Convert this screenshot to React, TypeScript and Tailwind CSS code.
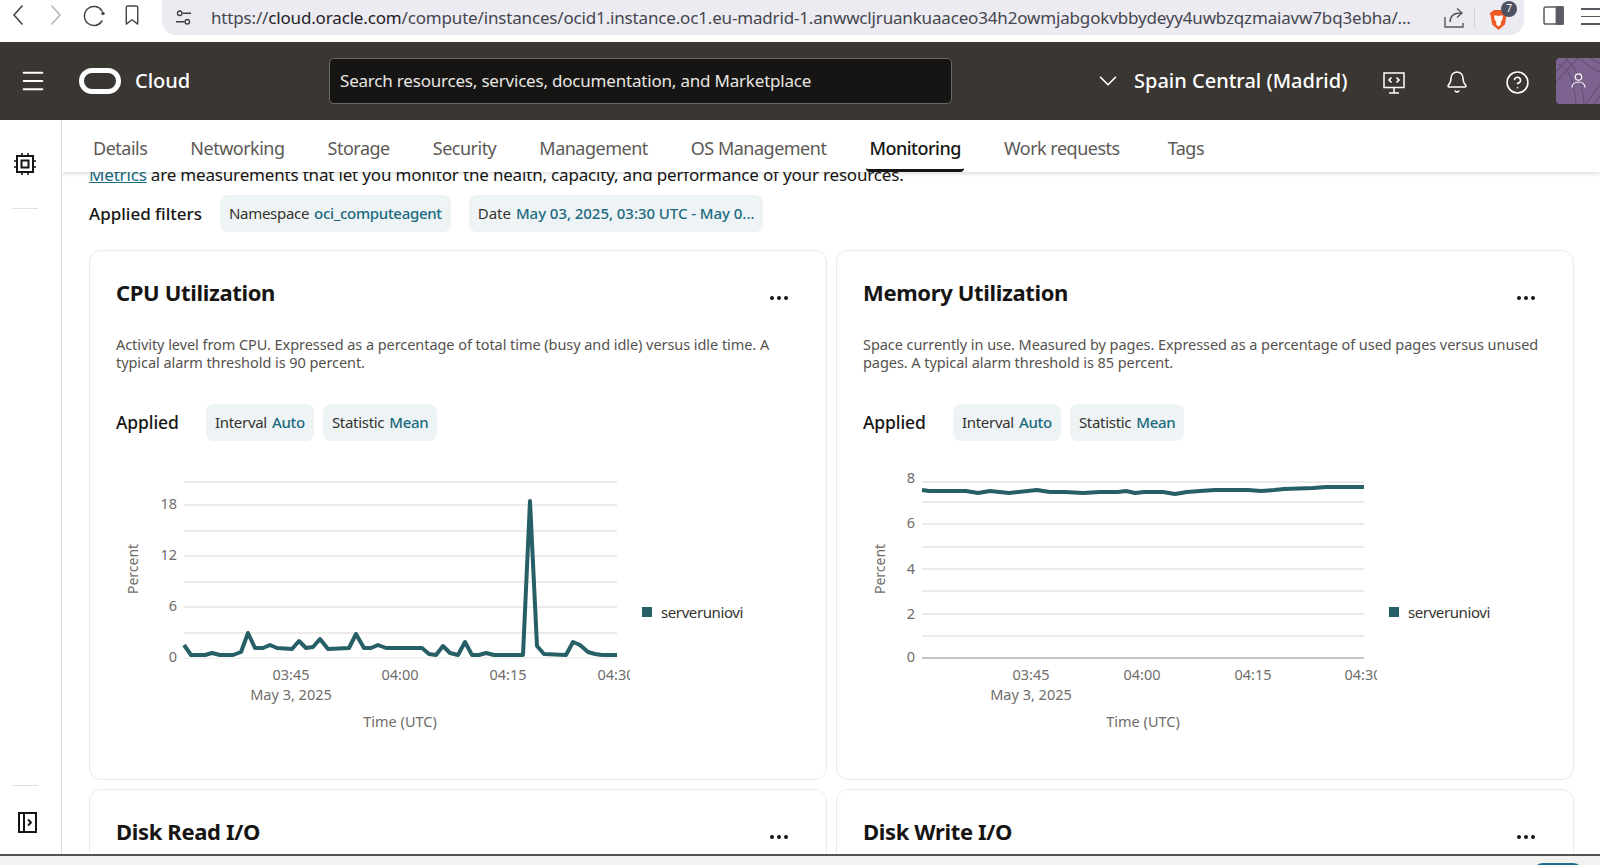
import { Bell, ChevronDown, CircleHelp, Menu } from "lucide-react";

const tabs = ["Details", "Networking", "Storage", "Security", "Management", "OS Management", "Monitoring", "Work requests", "Tags"];

// traced from the screenshot, page coordinates
const cpuLine = [
  [184, 645], [191, 655], [205, 655], [212, 653], [220, 655], [233, 655], [241, 652], [248, 633], [255, 648], [263, 648],
  [270, 645], [277, 648], [292, 649], [299, 641], [306, 648], [313, 647], [320, 639], [328, 649], [349, 648], [356, 634],
  [364, 648], [371, 648], [378, 645], [386, 648], [422, 648], [429, 654], [436, 655], [443, 646], [450, 653], [458, 655],
  [465, 642], [472, 655], [479, 655], [486, 653], [494, 655], [501, 655], [508, 655], [523, 655], [530, 501], [537, 646],
  [544, 654], [566, 655], [573, 642], [580, 645], [588, 652], [595, 654], [602, 655], [617, 655],
];

const memLine = [
  [922, 490], [929, 491], [966, 491], [978, 493], [990, 491], [1009, 493], [1037, 490], [1050, 492], [1065, 492], [1083, 493],
  [1100, 492], [1118, 492], [1126, 491], [1135, 493], [1144, 492], [1163, 492], [1175, 494], [1187, 492], [1200, 491], [1215, 490],
  [1248, 490], [1261, 491], [1274, 490], [1284, 489], [1313, 488], [1326, 487], [1364, 487],
];

function Chip({ label, value, track = "tracking-[-0.3px]" }: { label: string; value: string; track?: string }) {
  return (
    <div className={"flex h-[37px] items-center gap-[5px] whitespace-nowrap rounded-lg bg-[#eef4f5] px-[9px] text-[15px] text-[#35322e] " + track}>
      {label}
      <span className="font-medium text-[#1b6a80]">{value}</span>
    </div>
  );
}

function Chart({ left, x0, x1, line, grid, yLabels, xLabels, mayX, timeX, dark }: {
  left: number;
  x0: number;
  x1: number;
  line: number[][];
  grid: number[];
  yLabels: [string, number][];
  xLabels: [string, number][];
  mayX: number;
  timeX: number;
  dark?: boolean;
}) {
  const points = line.map((p) => p.join(",")).join(" ");
  return (
    <svg width="514" height="302" viewBox={`${left} 462 514 302`} className="shrink-0">
      {grid.map((y) => (
        <line key={y} x1={x0} x2={x1} y1={y} y2={y} stroke="#e6e5e3" strokeWidth="1.5" />
      ))}
      <line x1={x0} x2={x1} y1="658" y2="658" stroke={dark ? "#8b8985" : "#e6e5e3"} strokeWidth="1.2" />
      <polyline points={points} fill="none" stroke="#275f66" strokeWidth="4" strokeLinejoin="round" />
      <g fontSize="14.5" fill="#6f6d69">
        {yLabels.map(([t, y]) => (
          <text key={t} x={x0 - 7} y={y + 4} textAnchor="end">{t}</text>
        ))}
        {xLabels.map(([t, x]) => (
          <text key={t} x={x} y="680" textAnchor="middle">{t}</text>
        ))}
        <text x={mayX} y="700" textAnchor="middle">May 3, 2025</text>
        <text x={timeX} y="727" textAnchor="middle">Time (UTC)</text>
        <text transform={`translate(${left + 22},569) rotate(-90)`} textAnchor="middle" fontSize="14">Percent</text>
      </g>
    </svg>
  );
}

function CardHead({ title }: { title: string }) {
  return (
    <div className="flex items-center justify-between pr-[12px]">
      <h2 className="text-[22px] font-bold leading-[30px] tracking-[-0.35px] text-[#161513]">{title}</h2>
      <div className="mt-[11px] flex gap-[3px]">
        <span className="size-[4px] rounded-full bg-[#161513]" />
        <span className="size-[4px] rounded-full bg-[#161513]" />
        <span className="size-[4px] rounded-full bg-[#161513]" />
      </div>
    </div>
  );
}

function MetricCard({ title, desc, children }: { title: string; desc: string[]; children?: React.ReactNode }) {
  return (
    <div className="h-[530px] rounded-xl border border-[#ecebe9] bg-white px-[26px] pt-[26px]">
      <CardHead title={title} />
      <p className="mt-[29px] text-[14.5px] leading-[17.5px] tracking-[-0.06px] text-[#55524e]">
        {desc.map((d) => (
          <span key={d} className="block whitespace-nowrap">{d}</span>
        ))}
      </p>
      <div className="mt-[33px] flex items-center">
        <span className="w-[90px] text-[17.5px] font-medium tracking-[-0.1px] text-[#161513]">Applied</span>
        <div className="flex gap-[9px]">
          <Chip label="Interval" value="Auto" />
          <Chip label="Statistic" value="Mean" />
        </div>
      </div>
      <div className="mt-[21px] flex items-center">
        {children}
        <div className="-mt-[2px] ml-[12px] flex items-center gap-[9px] text-[15px] tracking-[-0.4px] text-[#35322e]">
          <span className="size-[10px] bg-[#275f66]" />
          serveruniovi
        </div>
      </div>
    </div>
  );
}

function BrowserBar() {
  return (
    <div className="flex h-[42px] shrink-0 items-start bg-white">
      <svg viewBox="0 0 12 22" className="ml-[12px] mt-[4px] h-[22px] w-[12px]" fill="none" stroke="#45464d" strokeWidth="1.6">
        <path d="M10.500 1.500 2 11l8.500 9.500" />
      </svg>
      <svg viewBox="0 0 12 22" className="ml-[26px] mt-[4px] h-[22px] w-[12px]" fill="none" stroke="#b5b5ba" strokeWidth="1.6">
        <path d="M1.500 1.500 10 11l-8.500 9.500" />
      </svg>
      <svg viewBox="0 0 24 24" className="ml-[21px] mt-[4px] size-[24px]" fill="none" stroke="#45464d" strokeWidth="1.5" strokeLinecap="round">
        <path d="M19 17a9.500 9.500 0 1 1 0-10" />
        <circle cx="20" cy="9.500" r="1.700" fill="#45464d" stroke="none" />
      </svg>
      <svg viewBox="0 0 16 22" className="ml-[17px] mt-[5px] h-[21px] w-[16px]" fill="none" stroke="#45464d" strokeWidth="1.5" strokeLinejoin="round">
        <path d="M2 2.500a1.500 1.500 0 0 1 1.500-1.500h9a1.500 1.500 0 0 1 1.500 1.500V20l-6-4.500L2 20z" />
      </svg>
      <div className="ml-[22px] flex h-[35px] w-[1362px] items-center rounded-b-[14px] bg-[#ecebf1] pl-[13px]">
        <svg viewBox="0 0 18 18" className="size-[17px]" fill="none" stroke="#3f4048" strokeWidth="1.4">
          <circle cx="5" cy="4.500" r="2.400" />
          <path d="M8 4.500h9M1 13.500h9" />
          <circle cx="13" cy="13.500" r="2.400" />
        </svg>
        <span className="ml-[19px] w-[1203px] whitespace-nowrap text-[17px] tracking-[-0.165px] text-[#45464f]">
          https://<span className="text-[#1f2026]">cloud.oracle.com</span>/compute/instances/ocid1.instance.oc1.eu-madrid-1.anwwcljruankuaaceo34h2owmjabgokvbbydeyy4uwbzqzmaiavw7bq3ebha/...
        </span>
        <svg viewBox="0 0 22 22" className="ml-auto size-[22px]" fill="none" stroke="#55565e" strokeWidth="1.4">
          <path d="M2 10v10h18v-4M7 15c0-6 4-9 11-9M14 1.500 19 6l-5 4.500" />
        </svg>
        <span className="ml-[9px] h-[20px] w-[1.5px] bg-[#d3d3d8]" />
        <svg viewBox="0 0 20 24" className="ml-[14px] mt-[4px] h-[22px] w-[19px]">
          <path d="M5 1h10l2 2 2.500 1-1 4-1.500 9-7 6-7-6L1.500 8l-1-4L3 3z" fill="#ef5a25" />
          <path d="M5 7h3.500L10 8l1.500-1H15l-1 5-1.500 2v3L10 19l-2.500-2v-3L6 12z" fill="#fff" />
        </svg>
        <span className="relative -left-[7px] -top-[9px] flex size-[16px] items-center justify-center rounded-full bg-[#4d5263] text-[10px] text-white">7</span>
      </div>
      <svg viewBox="0 0 22 20" className="ml-[19px] mt-[6px] h-[19px] w-[21px]" fill="none" stroke="#5b5c63" strokeWidth="1.6">
        <rect x="1" y="1" width="20" height="18" rx="2" />
        <rect x="14" y="1" width="7" height="18" fill="#5b5c63" />
      </svg>
      <div className="ml-[17px] mt-[8px] flex w-[19px] flex-col gap-[6px]">
        <span className="h-[1.5px] bg-[#55565e]" />
        <span className="h-[1.5px] bg-[#55565e]" />
        <span className="h-[1.5px] bg-[#55565e]" />
      </div>
    </div>
  );
}

function Header() {
  return (
    <header className="flex h-[78px] shrink-0 items-center bg-[#3a3632] text-white">
      <div className="flex w-[329px] shrink-0 items-center">
        <Menu className="ml-[19px] size-[28px]" strokeWidth={1.7} />
        <svg viewBox="0 0 42 26" className="ml-[32px] h-[26px] w-[42px]" fill="none" stroke="#fff" strokeWidth="5">
          <rect x="2.500" y="2.500" width="37" height="21" rx="10.500" />
        </svg>
        <span className="ml-[14px] text-[20px] font-medium">Cloud</span>
      </div>
      <div className="flex h-[46px] w-[623px] shrink-0 items-center rounded-[5px] border border-[#6b6965] bg-[#161513] pl-[10px] text-[17px] tracking-[-0.2px] text-[#e8e6e3]">
        Search resources, services, documentation, and Marketplace
      </div>
      <ChevronDown className="ml-[141px] size-[30px]" strokeWidth={1.4} />
      <span className="ml-[11px] whitespace-nowrap text-[20px] font-medium">Spain Central (Madrid)</span>
      <div className="ml-auto flex items-center">
        <svg viewBox="0 0 22 22" className="mt-[3px] size-[22px]" fill="none" stroke="#fff" strokeWidth="1.5">
          <rect x="1" y="1" width="20" height="14.500" />
          <path d="M11 15.500V21M6 21h10" />
          <path d="M8.500 5.500 6 8l2.500 2.500M13.500 5.500 16 8l-2.500 2.500" strokeWidth="1.7" />
        </svg>
        <Bell className="ml-[40px] mt-[2px] size-[24px]" strokeWidth={1.5} />
        <CircleHelp className="ml-[36px] mt-[2px] size-[25px]" strokeWidth={1.5} />
        <svg viewBox="0 0 44 46" className="ml-[26px] h-[46px] w-[44px]">
          <path d="M4 0h40v46H4a4 4 0 0 1-4-4V4a4 4 0 0 1 4-4z" fill="#7d6490" />
          <g fill="none" stroke="#6a5279" strokeWidth="1.300">
            <path d="M0 14 12 0M0 24 22 0M2 6c10 4 16 14 18 40M10 2c10 6 16 20 18 44M30 46 44 26M38 46l6-8M24 0c6 6 14 12 20 14M34 0l10 6" />
          </g>
          <circle cx="22.500" cy="19" r="3.200" fill="none" stroke="#fff" strokeWidth="1.200" />
          <path d="M16 29.500c0-3.500 3-5.500 6.500-5.500s6.500 2 6.500 5.500" fill="none" stroke="#fff" strokeWidth="1.200" />
        </svg>
      </div>
    </header>
  );
}

function Sidebar() {
  return (
    <aside className="flex w-[62px] shrink-0 flex-col items-start border-r border-[#dedddb] pb-[21px] pl-[12px] pt-[33px]">
      <svg viewBox="0 0 22 22" className="ml-[2px] size-[22px]" fill="none" stroke="#161513" strokeWidth="2">
        <rect x="3" y="3" width="16" height="16" />
        <rect x="7.500" y="7.500" width="7" height="7" />
        <path d="M8 0v3M14 0v3M8 19v3M14 19v3M0 8h3M0 14h3M19 8h3M19 14h3" strokeWidth="1.600" />
      </svg>
      <span className="mt-[33px] h-px w-[26px] bg-[#e2e1df]" />
      <span className="mt-auto h-px w-[26px] bg-[#e2e1df]" />
      <svg viewBox="0 0 19 21" className="ml-[6px] mt-[26px] h-[21px] w-[19px]" fill="none" stroke="#161513" strokeWidth="2">
        <rect x="1" y="1" width="17" height="19" />
        <path d="M6 1v19" />
        <path d="M10 7.500l3 3-3 3" strokeWidth="1.800" />
      </svg>
    </aside>
  );
}

export default function App() {
  return (
    <div className="flex h-[865px] w-[1600px] flex-col overflow-hidden bg-white font-['Noto_Sans',sans-serif]">
      <BrowserBar />
      <Header />
      <div className="flex min-h-0 flex-1">
        <Sidebar />
        <main className="flex min-w-0 flex-1 flex-col overflow-hidden">
          <nav className="relative z-10 flex h-[52px] shrink-0 items-stretch gap-[39px] bg-white pl-[29px] text-[18px] tracking-[-0.5px] text-[#5c5a56] shadow-[0_2px_4px_rgba(0,0,0,0.13)]">
            {tabs.map((t) => (
              <a
                key={t}
                className={
                  t === "Monitoring"
                    ? "-mx-px flex items-center rounded-b-sm border-b-[3px] border-[#161513] px-[3px] pt-[7px] font-medium text-[#161513]"
                    : t === "Tags"
                      ? "ml-[5px] flex items-center border-b-[3px] border-transparent px-[2px] pt-[7px]"
                      : "flex items-center border-b-[3px] border-transparent px-[2px] pt-[7px]"
                }
              >
                {t}
              </a>
            ))}
          </nav>
          <div className="-mt-[9px] pl-[27px]">
            <p className="h-[24px] whitespace-nowrap text-[17px] leading-[24px] tracking-[-0.18px] text-[#161513]">
              <span className="text-[#1b6a80] underline">Metrics</span> are measurements that let you monitor the health, capacity, and performance of your resources.
            </p>
            <div className="mt-[8px] flex items-center">
              <span className="w-[131px] text-[17px] font-medium text-[#161513]">Applied filters</span>
              <div className="flex gap-[18px]">
                <Chip label="Namespace" value="oci_computeagent" />
                <Chip label="Date" value="May 03, 2025, 03:30 UTC - May 0..." track="tracking-[-0.05px]" />
              </div>
            </div>
            <div className="mt-[18px] grid grid-cols-[738px_738px] gap-x-[9px] gap-y-[9px]">
              <MetricCard
                title="CPU Utilization"
                desc={[
                  "Activity level from CPU. Expressed as a percentage of total time (busy and idle) versus idle time. A",
                  "typical alarm threshold is 90 percent.",
                ]}
              >
                <Chart
                  left={116}
                  x0={184}
                  x1={617}
                  line={cpuLine}
                  grid={[482, 505, 531, 556, 582, 607, 633]}
                  yLabels={[["18", 505], ["12", 556], ["6", 607], ["0", 658]]}
                  xLabels={[["03:45", 291], ["04:00", 400], ["04:15", 508], ["04:30", 616]]}
                  mayX={291}
                  timeX={400}
                />
              </MetricCard>
              <MetricCard
                title="Memory Utilization"
                desc={[
                  "Space currently in use. Measured by pages. Expressed as a percentage of used pages versus unused",
                  "pages. A typical alarm threshold is 85 percent.",
                ]}
              >
                <Chart
                  left={863}
                  x0={922}
                  x1={1364}
                  line={memLine}
                  grid={[482, 502, 524, 547, 569, 591, 614, 636]}
                  yLabels={[["8", 479], ["6", 524], ["4", 570], ["2", 615], ["0", 658]]}
                  xLabels={[["03:45", 1031], ["04:00", 1142], ["04:15", 1253], ["04:30", 1363]]}
                  mayX={1031}
                  timeX={1143}
                  dark
                />
              </MetricCard>
              <div className="h-[530px] rounded-xl border border-[#ecebe9] px-[26px] pt-[26px]">
                <CardHead title="Disk Read I/O" />
              </div>
              <div className="h-[530px] rounded-xl border border-[#ecebe9] px-[26px] pt-[26px]">
                <CardHead title="Disk Write I/O" />
              </div>
            </div>
          </div>
        </main>
      </div>
      <div className="relative z-20 flex h-[11px] shrink-0 justify-end overflow-hidden border-t-2 border-[#55534f] bg-[#f3f2f0] pr-[17px]">
        <span className="mt-[7px] h-[10px] w-[50px] rounded-t-full bg-[#1a6e8e]" />
      </div>
    </div>
  );
}
